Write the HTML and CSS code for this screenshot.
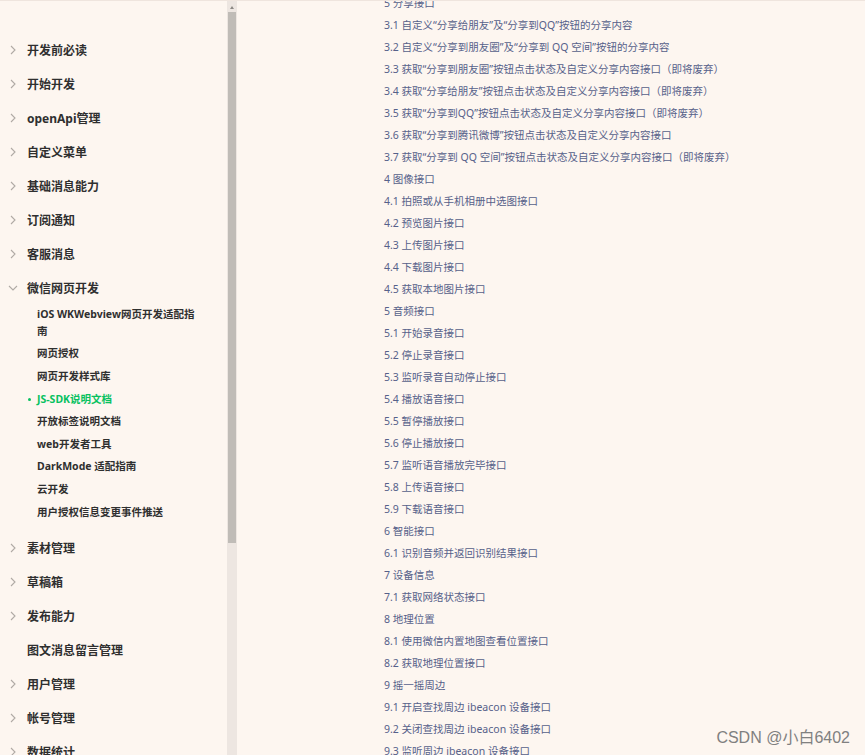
FILE: index.html
```html
<!DOCTYPE html>
<html lang="zh-CN">
<head>
<meta charset="utf-8">
<title>JS-SDK说明文档</title>
<link rel="stylesheet" href="styles.css">
</head>
<body>
<div class="page">
  <nav class="sidebar">
    <div class="nav-item"><span class="chev"><svg width="6" height="10" viewBox="0 0 6 10"><path d="M1 1l4 4-4 4" fill="none" stroke="#b0aaa5" stroke-width="1.1"/></svg></span>开发前必读</div>
    <div class="nav-item"><span class="chev"><svg width="6" height="10" viewBox="0 0 6 10"><path d="M1 1l4 4-4 4" fill="none" stroke="#b0aaa5" stroke-width="1.1"/></svg></span>开始开发</div>
    <div class="nav-item"><span class="chev"><svg width="6" height="10" viewBox="0 0 6 10"><path d="M1 1l4 4-4 4" fill="none" stroke="#b0aaa5" stroke-width="1.1"/></svg></span>openApi管理</div>
    <div class="nav-item"><span class="chev"><svg width="6" height="10" viewBox="0 0 6 10"><path d="M1 1l4 4-4 4" fill="none" stroke="#b0aaa5" stroke-width="1.1"/></svg></span>自定义菜单</div>
    <div class="nav-item"><span class="chev"><svg width="6" height="10" viewBox="0 0 6 10"><path d="M1 1l4 4-4 4" fill="none" stroke="#b0aaa5" stroke-width="1.1"/></svg></span>基础消息能力</div>
    <div class="nav-item"><span class="chev"><svg width="6" height="10" viewBox="0 0 6 10"><path d="M1 1l4 4-4 4" fill="none" stroke="#b0aaa5" stroke-width="1.1"/></svg></span>订阅通知</div>
    <div class="nav-item"><span class="chev"><svg width="6" height="10" viewBox="0 0 6 10"><path d="M1 1l4 4-4 4" fill="none" stroke="#b0aaa5" stroke-width="1.1"/></svg></span>客服消息</div>
    <div class="nav-item"><span class="chev chev-open"><svg width="10" height="6" viewBox="0 0 10 6"><path d="M1 1l4 4 4-4" fill="none" stroke="#b0aaa5" stroke-width="1.1"/></svg></span>微信网页开发</div>
    <div class="sub-list">
      <div class="sub-item">iOS WKWebview网页开发适配指南</div>
      <div class="sub-item">网页授权</div>
      <div class="sub-item">网页开发样式库</div>
      <div class="sub-item active">JS-SDK说明文档</div>
      <div class="sub-item">开放标签说明文档</div>
      <div class="sub-item">web开发者工具</div>
      <div class="sub-item">DarkMode 适配指南</div>
      <div class="sub-item">云开发</div>
      <div class="sub-item">用户授权信息变更事件推送</div>
    </div>
    <div class="nav-item"><span class="chev"><svg width="6" height="10" viewBox="0 0 6 10"><path d="M1 1l4 4-4 4" fill="none" stroke="#b0aaa5" stroke-width="1.1"/></svg></span>素材管理</div>
    <div class="nav-item"><span class="chev"><svg width="6" height="10" viewBox="0 0 6 10"><path d="M1 1l4 4-4 4" fill="none" stroke="#b0aaa5" stroke-width="1.1"/></svg></span>草稿箱</div>
    <div class="nav-item"><span class="chev"><svg width="6" height="10" viewBox="0 0 6 10"><path d="M1 1l4 4-4 4" fill="none" stroke="#b0aaa5" stroke-width="1.1"/></svg></span>发布能力</div>
    <div class="nav-item"><span class="chev"></span>图文消息留言管理</div>
    <div class="nav-item"><span class="chev"><svg width="6" height="10" viewBox="0 0 6 10"><path d="M1 1l4 4-4 4" fill="none" stroke="#b0aaa5" stroke-width="1.1"/></svg></span>用户管理</div>
    <div class="nav-item"><span class="chev"><svg width="6" height="10" viewBox="0 0 6 10"><path d="M1 1l4 4-4 4" fill="none" stroke="#b0aaa5" stroke-width="1.1"/></svg></span>帐号管理</div>
    <div class="nav-item"><span class="chev"><svg width="6" height="10" viewBox="0 0 6 10"><path d="M1 1l4 4-4 4" fill="none" stroke="#b0aaa5" stroke-width="1.1"/></svg></span>数据统计</div>
  </nav>
  <div class="scrollbar">
    <div class="scroll-arrow"></div>
    <div class="scroll-thumb"></div>
  </div>
  <main class="content">
    <ul class="toc">
      <li>5 分享接口</li>
      <li>3.1 自定义“分享给朋友”及“分享到QQ”按钮的分享内容</li>
      <li>3.2 自定义“分享到朋友圈”及“分享到 QQ 空间”按钮的分享内容</li>
      <li>3.3 获取“分享到朋友圈”按钮点击状态及自定义分享内容接口（即将废弃）</li>
      <li>3.4 获取“分享给朋友”按钮点击状态及自定义分享内容接口（即将废弃）</li>
      <li>3.5 获取“分享到QQ”按钮点击状态及自定义分享内容接口（即将废弃）</li>
      <li>3.6 获取“分享到腾讯微博”按钮点击状态及自定义分享内容接口</li>
      <li>3.7 获取“分享到 QQ 空间”按钮点击状态及自定义分享内容接口（即将废弃）</li>
      <li>4 图像接口</li>
      <li>4.1 拍照或从手机相册中选图接口</li>
      <li>4.2 预览图片接口</li>
      <li>4.3 上传图片接口</li>
      <li>4.4 下载图片接口</li>
      <li>4.5 获取本地图片接口</li>
      <li>5 音频接口</li>
      <li>5.1 开始录音接口</li>
      <li>5.2 停止录音接口</li>
      <li>5.3 监听录音自动停止接口</li>
      <li>5.4 播放语音接口</li>
      <li>5.5 暂停播放接口</li>
      <li>5.6 停止播放接口</li>
      <li>5.7 监听语音播放完毕接口</li>
      <li>5.8 上传语音接口</li>
      <li>5.9 下载语音接口</li>
      <li>6 智能接口</li>
      <li>6.1 识别音频并返回识别结果接口</li>
      <li>7 设备信息</li>
      <li>7.1 获取网络状态接口</li>
      <li>8 地理位置</li>
      <li>8.1 使用微信内置地图查看位置接口</li>
      <li>8.2 获取地理位置接口</li>
      <li>9 摇一摇周边</li>
      <li>9.1 开启查找周边 ibeacon 设备接口</li>
      <li>9.2 关闭查找周边 ibeacon 设备接口</li>
      <li>9.3 监听周边 ibeacon 设备接口</li>
    </ul>
    <div class="watermark">CSDN @小白6402</div>
  </main>
</div>
</body>
</html>
```

FILE: styles.css
```css
html, body {
  margin: 0;
  padding: 0;
  height: 100%;
  overflow: hidden;
}
body {
  background: #fdf6f0;
  font-family: "Noto Sans", "Noto Sans CJK SC", sans-serif;
  border-top: 1px solid #efe5de;
  box-sizing: border-box;
}
.page {
  display: flex;
  height: 754px;
  overflow: hidden;
}
.sidebar {
  width: 227px;
  flex: none;
  padding-top: 32px;
  box-sizing: border-box;
  display: flex;
  flex-direction: column;
}
.nav-item {
  height: 34px;
  display: flex;
  align-items: center;
  font-size: 12px;
  font-weight: bold;
  color: #2f2f2f;
  flex: none;
}
.chev {
  width: 27px;
  flex: none;
  display: flex;
  align-items: center;
  padding-left: 10px;
  box-sizing: border-box;
}
.chev-open {
  padding-left: 8px;
}
.sub-list {
  margin-top: -2px;
  padding-bottom: 8px;
  display: flex;
  flex-direction: column;
}
.sub-item {
  font-size: 10.5px;
  font-weight: bold;
  color: #2f2f2f;
  line-height: 17px;
  padding: 2.8px 26px 2.8px 37px;
  position: relative;
}
.sub-item.active {
  color: #07c160;
}
.sub-item.active::before {
  content: "";
  position: absolute;
  left: 28px;
  top: 10px;
  width: 3px;
  height: 3px;
  border-radius: 50%;
  background: #07c160;
}
.scrollbar {
  width: 10px;
  flex: none;
  background: #ede6e1;
  display: flex;
  flex-direction: column;
  align-items: center;
}
.scroll-arrow {
  margin-top: 5px;
  width: 0;
  height: 0;
  border-left: 2.5px solid transparent;
  border-right: 2.5px solid transparent;
  border-bottom: 3px solid #8c8884;
}
.scroll-thumb {
  margin-top: 3px;
  width: 8px;
  height: 531px;
  background: #c0bcb7;
}
.content {
  flex: 1;
  position: relative;
  padding-left: 147px;
}
.toc {
  list-style: none;
  margin: -9px 0 0;
  padding: 0;
}
.toc li {
  font-size: 10.5px;
  line-height: 22px;
  height: 22px;
  color: #56618a;
  white-space: nowrap;
}
.watermark {
  position: absolute;
  right: 15px;
  bottom: 7px;
  font-family: "Liberation Sans", "Noto Sans CJK SC", sans-serif;
  font-size: 16px;
  color: #808080;
}
```
